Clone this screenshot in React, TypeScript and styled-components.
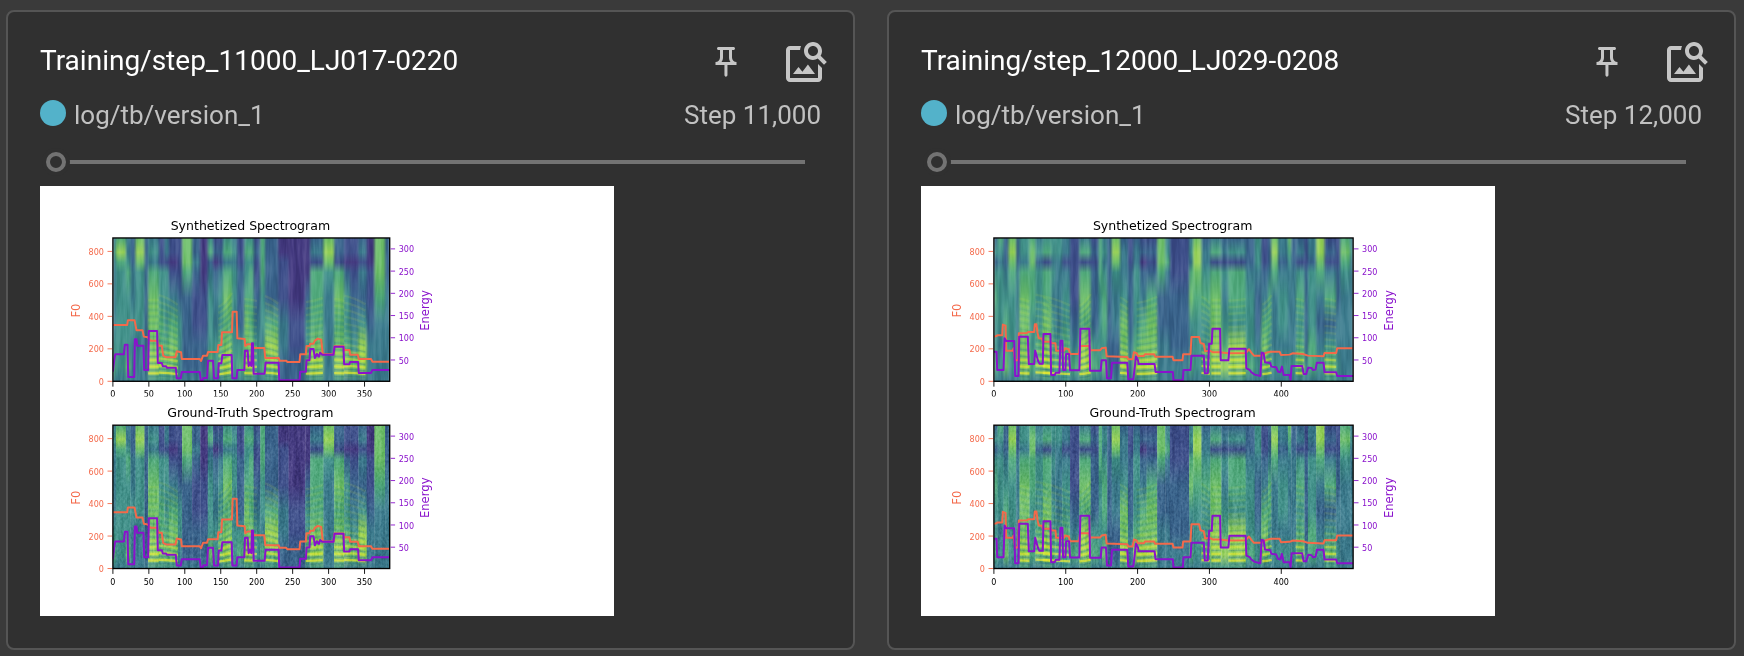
import React, { useId } from "react";
import styled, { createGlobalStyle } from "styled-components";

const GlobalStyle = createGlobalStyle`
  *, *::before, *::after { box-sizing: border-box; }
  body { margin: 0; background: #3a3a3a; font-family: Roboto, "Liberation Sans", sans-serif; }
`;

const Board = styled.main`
  display: grid;
  grid-template-columns: repeat(2, minmax(0, 1fr));
  gap: 32px;
  padding: 10px 8px 6px 6px;
`;

const Card = styled.article`
  padding: 26px 0 32px;
  background: #303030;
  border: 2px solid #555555;
  border-radius: 8px;
`;

const CardHeader = styled.header`
  display: flex;
  align-items: center;
  padding: 0 7px 0 32px;
`;

const Title = styled.h2`
  flex: 1;
  margin: 0;
  padding-bottom: 2px;
  color: #ffffff;
  font-size: 28px;
  font-weight: 400;
  line-height: 32px;
`;

const IconButton = styled.button`
  display: flex;
  align-items: center;
  justify-content: center;
  width: 80px;
  height: 48px;
  padding: 0;
  border: 0;
  background: none;
  color: #c6c6c6;
  cursor: pointer;
`;

const Icon = styled.svg<{ $size: number }>`
  width: ${(p) => p.$size}px;
  height: ${(p) => p.$size}px;
  fill: currentColor;
`;

const RunRow = styled.div`
  display: flex;
  align-items: flex-start;
  gap: 8px;
  margin-top: 14px;
  padding: 0 32px;
  color: #c1c1c1;
  font-size: 26px;
  line-height: 30px;
`;

const RunDot = styled.span<{ $color: string }>`
  width: 26px;
  height: 26px;
  border-radius: 50%;
  background: ${(p) => p.$color};
`;

const RunName = styled.span`
  flex: 1;
`;

const StepSlider = styled.input`
  appearance: none;
  display: block;
  width: calc(100% - 86px);
  height: 20px;
  margin: 22px 48px 0 38px;
  background: none;
  cursor: pointer;

  &::-webkit-slider-runnable-track {
    height: 4px;
    background: #737373;
  }

  &::-webkit-slider-thumb {
    appearance: none;
    width: 20px;
    height: 20px;
    margin-top: -8px;
    border: 4px solid #737373;
    border-radius: 50%;
    background: #303030;
    box-shadow: 0 0 0 4px #303030;
  }
`;

const Figure = styled.figure`
  margin: 14px 32px 0;
`;

const Plot = styled.svg`
  display: block;
  max-width: 100%;
  background: #ffffff;
  font-family: "DejaVu Sans", sans-serif;
`;

type Point = [number, number];
type Band = [number, string];
type Voice = [number, number, number];

interface Sample {
  title: string;
  step: string;
  span: number;
  origin: number;
  frames: number;
  xTicks: number[];
  bands: Band[];
  voices: Voice[];
  f0: Point[];
  energy: Point[];
}

const RAMP = ["#46206e", "#443a80", "#3e4f8a", "#3a648c", "#3b7a8c", "#42918a", "#52aa7e", "#70bf6c", "#98d15a", "#dfe23c"];
const STOPS = [0, 10, 17, 24, 42, 60, 75, 90, 100];

const pairs = (s: string): Point[] =>
  s.trim().split(/\s+/).map((p) => p.split(",").map(Number) as Point);

/* Each band: its left edge and its intensity at the nine heights in STOPS, top to bottom. */
const samples: Sample[] = [
  {
    title: "Training/step_11000_LJ017-0220",
    step: "Step 11,000",
    span: 832,
    origin: 217,
    frames: 385,
    xTicks: [0, 50, 100, 150, 200, 250, 300, 350],
    bands: [
      [217, "454444564"], [226, "686555554"], [256, "445655574"], [270, "333445444"], [285, "787555444"],
      [312, "333333334"], [323, "454677785"], [355, "222556675"], [372, "442555675"], [385, "221246775"],
      [412, "222235544"], [425, "777633334"], [455, "334322334"], [480, "111122334"], [502, "563455574"],
      [518, "231344554"], [534, "232455674"], [548, "564676785"], [575, "454554554"], [590, "222333564"],
      [612, "565567785"], [626, "565666785"], [640, "232234554"], [660, "666655464"], [674, "333336875"],
      [714, "112224433"], [745, "111112233"], [795, "111135574"], [810, "342666785"], [850, "787544444"],
      [882, "332676785"], [912, "221355684"], [930, "221234574"], [955, "342435884"], [980, "111223444"],
      [1003, "777764444"], [1035, "333344444"],
    ],
    voices: [
      [323, 355, 0], [355, 412, 18], [534, 575, -26], [612, 650, 4], [674, 714, 14],
      [797, 848, -8], [882, 912, 3], [912, 976, 16],
    ],
    f0: pairs(`217,435 260,435 262,421 282,421 288,451 306,451 310,470 322,472 330,482 350,482 353,497 364,497
      368,527 378,532 405,532 409,514 422,517 424,537 478,537 482,543 488,527 500,527 503,516 532,516 534,495
      543,495 545,457 575,457 577,395 589,395 591,475 613,477 615,498 622,493 632,493 640,504 672,504 675,534
      715,534 718,542 738,542 741,546 778,546 780,523 797,523 799,498 808,498 810,491 820,491 824,482 833,476
      843,479 848,523 880,523 883,499 910,499 912,510 928,510 930,524 953,524 956,537 993,537 997,545 1049,545`),
    energy: pairs(`217,575 221,540 224,523 250,523 253,494 261,494 263,591 281,591 283,478 288,478 290,497 309,497
      311,570 323,570 325,453 350,453 352,549 364,549 367,559 377,559 379,563 406,563 409,595 421,595 424,576
      478,576 481,601 487,601 489,594 500,594 503,542 518,542 521,595 533,595 535,550 543,550 546,525 574,525
      576,595 589,595 591,570 612,570 614,512 622,512 625,558 629,548 633,558 635,490 638,490 640,581 673,581
      676,548 715,548 717,600 778,601 780,575 797,575 799,541 808,541 810,507 820,507 824,534 830,522 836,530
      840,518 846,524 880,524 883,500 910,500 912,553 928,553 930,546 954,546 956,579 993,579 997,570 1049,570`),
  },
  {
    title: "Training/step_12000_LJ029-0208",
    step: "Step 12,000",
    span: 1080,
    origin: 101,
    frames: 500,
    xTicks: [0, 100, 200, 300, 400],
    bands: [
      [101, "353565564"], [112, "654555454"], [130, "333456674"], [145, "787655554"], [168, "333444444"],
      [178, "554677785"], [208, "677665564"], [226, "453555674"], [248, "562667785"], [274, "554545564"],
      [286, "554444564"], [306, "442455665"], [330, "222223464"], [358, "462676885"], [392, "232333564"],
      [416, "666655554"], [426, "454566574"], [442, "333333334"], [455, "787544334"], [480, "344457785"],
      [504, "222333444"], [520, "344555684"], [540, "231346785"], [560, "232367785"], [592, "777633444"],
      [616, "456433444"], [630, "222233344"], [688, "454675464"], [700, "788765554"], [725, "344565564"],
      [752, "462677885"], [785, "342545685"], [806, "352665885"], [858, "333455564"], [885, "555433454"],
      [905, "222346774"], [925, "333466564"], [935, "787644454"], [955, "443455454"], [985, "765444454"],
      [995, "333444454"], [1010, "342565674"], [1035, "222333344"], [1045, "443555664"], [1070, "887643454"],
      [1095, "232463575"], [1130, "222334454"], [1142, "676544444"], [1172, "454444444"],
    ],
    voices: [
      [178, 208, 5], [248, 274, 10], [226, 330, 20], [358, 392, -22], [480, 504, 10], [530, 592, -12],
      [725, 750, 12], [755, 783, 0], [806, 858, -3], [908, 936, -18], [1008, 1034, 4], [1095, 1130, 4],
    ],
    f0: pairs(`101,470 109,468 111,466 126,466 128,434 136,437 138,512 158,512 160,505 165,541 174,541 176,460
      200,459 204,456 222,456 224,433 229,433 232,458 236,475 246,476 248,485 272,485 275,490 286,490 288,512
      312,512 315,505 326,508 330,522 357,522 360,498 387,498 390,511 420,511 425,505 437,503 440,529 502,531
      505,538 518,538 522,517 530,520 534,528 552,528 555,523 583,523 586,530 638,530 641,541 668,541 670,523
      692,523 695,471 718,471 722,489 732,492 736,514 750,512 760,517 780,517 806,520 858,519 868,508 875,518
      883,527 904,527 920,518 932,515 960,515 964,525 990,524 1000,520 1030,522 1045,527 1092,529 1095,519
      1130,519 1133,505 1181,505`),
    energy: pairs(`101,515 109,515 111,570 130,570 133,475 138,483 162,483 165,588 175,588 177,470 203,470 206,552
      222,552 225,512 234,543 238,551 248,551 250,462 271,462 273,585 284,585 287,578 298,578 301,482 307,482
      309,570 316,570 318,522 327,522 330,571 358,571 361,446 388,446 390,572 422,572 425,541 438,541 441,595
      453,595 456,548 502,548 505,598 520,598 523,575 528,530 534,540 536,552 584,552 587,576 639,576 641,601
      669,601 671,570 692,570 695,527 732,527 735,580 744,580 748,491 756,491 758,446 781,446 783,541 806,541
      809,506 858,506 860,565 870,570 875,577 885,584 902,588 906,518 912,520 916,547 932,549 935,560 950,562
      955,575 962,577 967,560 972,585 990,585 993,600 996,558 1028,558 1032,582 1040,582 1046,563 1056,564
      1060,570 1068,569 1072,548 1092,548 1095,577 1130,577 1133,588 1181,588`),
  },
];

const PLOT_TOP = 174;
const PLOT_HEIGHT = 430;
const F0_TICKS = [0, 200, 400, 600, 800];
const ENERGY_TICKS = [50, 100, 150, 200, 250, 300];
const ORANGE = "#f4694a";
const PURPLE = "#8a12cc";

interface ChartProps {
  sample: Sample;
  title: string;
  top: number;
  grainy?: boolean;
}

function Spectrogram({ sample, title, top, grainy = false }: ChartProps) {
  const id = useId().replace(/[^a-zA-Z0-9]/g, "");
  const { bands, voices, origin, span } = sample;
  const left = 81;
  const width = Math.round(span * 0.3717);
  const height = 160;
  const bottom = top + height;
  const end = origin + span;
  const right = left + width;
  const line = (pts: Point[]) => pts.map((p) => p.join(",")).join(" ");

  return (
    <g>
      <defs>
        {bands.map(([x, levels]) => (
          <linearGradient key={x} id={`${id}b${x}`} x1="0" y1="0" x2="0" y2="1">
            {STOPS.map((offset, i) => (
              <stop key={offset} offset={`${offset}%`} stopColor={RAMP[Number(levels[i])]} />
            ))}
          </linearGradient>
        ))}
        <filter id={`${id}soft`} x="0" y="0" width="1" height="1" colorInterpolationFilters="sRGB">
          <feGaussianBlur stdDeviation={grainy ? "2 1" : "3 2"} edgeMode="duplicate" />
        </filter>
        <filter id={`${id}streak`} x="0" y="0" width="1" height="1" colorInterpolationFilters="sRGB">
          <feTurbulence type="fractalNoise" baseFrequency="0.08 0.008" numOctaves="3" seed={span} />
          <feColorMatrix values="2.4 0 0 0 -0.7  2.4 0 0 0 -0.7  2.4 0 0 0 -0.7  0 0 0 0 1" />
        </filter>
        <filter id={`${id}grain`} x="0" y="0" width="1" height="1" colorInterpolationFilters="sRGB">
          <feTurbulence type="fractalNoise" baseFrequency="0.16 0.1" numOctaves="2" seed={span + 1} />
          <feColorMatrix values="1.8 0 0 0 -0.4  1.8 0 0 0 -0.4  1.8 0 0 0 -0.4  0 0 0 0 1" />
        </filter>
      </defs>
      <text x={left + width / 2 - 1} y={top - 9} fontSize="14" textAnchor="middle">{title}</text>
      <svg x={left} y={top} width={width} height={height} viewBox={`${origin} ${PLOT_TOP} ${span} ${PLOT_HEIGHT}`} preserveAspectRatio="none">
        <g filter={`url(#${id}soft)`}>
          {bands.map(([x], i) => (
            <rect
              key={x}
              x={x}
              y={PLOT_TOP}
              width={(bands[i + 1]?.[0] ?? end) - x + 1}
              height={PLOT_HEIGHT}
              fill={`url(#${id}b${x})`}
            />
          ))}
        </g>
        {voices.map(([a, b, drop]) =>
          Array.from({ length: 12 }, (_, k) => {
            const y = 600 - (k + 1) * 20;
            const bend = (drop * (k + 2)) / 8;
            const mid = (a + b) / 2;
            const d = `M${a} ${y - bend / 2}Q${mid} ${y - bend / 4} ${b} ${y + bend / 2}`;
            return (
              <g key={`${a}-${k}`} fill="none">
                <path d={d} stroke="#e4e833" strokeWidth="7" opacity={Math.max(0.1, 0.75 - k * 0.14)} />
                <path d={d} transform="translate(0 10)" stroke="#2f7f88" strokeWidth="5" opacity={Math.max(0.12, 0.5 - k * 0.05)} />
              </g>
            );
          }),
        )}
        <rect x={origin} y={PLOT_TOP} width={span} height={PLOT_HEIGHT} filter={`url(#${id}streak)`} opacity="0.2" style={{ mixBlendMode: "soft-light" }} />
        {grainy && (
          <rect x={origin} y={PLOT_TOP} width={span} height={PLOT_HEIGHT} filter={`url(#${id}grain)`} opacity="0.22" style={{ mixBlendMode: "soft-light" }} />
        )}
        <g fill="none" strokeLinejoin="round">
          <polyline points={line(sample.f0)} stroke={ORANGE} strokeWidth="6" />
          <polyline points={line(sample.energy)} stroke={PURPLE} strokeWidth="6" />
        </g>
      </svg>
      <rect x={left} y={top} width={width} height={height} fill="none" stroke="#000000" strokeWidth="1.5" />
      <g fontFamily="DejaVu Sans Condensed, DejaVu Sans, sans-serif" fontSize="10">
        {F0_TICKS.map((v) => {
          const y = bottom - (v * 145) / 800;
          return (
            <g key={v} fill={ORANGE}>
              <path d={`M${left - 6} ${y}H${left - 1}`} stroke={ORANGE} />
              <text x={left - 10} y={y + 4} textAnchor="end">{v}</text>
            </g>
          );
        })}
        {ENERGY_TICKS.map((v) => {
          const y = bottom + 1 - (v * 124) / 250;
          return (
            <g key={v} fill={PURPLE}>
              <path d={`M${right + 1} ${y}H${right + 6}`} stroke={PURPLE} />
              <text x={right + 10} y={y + 4}>{v}</text>
            </g>
          );
        })}
        {sample.xTicks.map((v) => {
          const x = left + (v * width) / sample.frames;
          return (
            <g key={v}>
              <path d={`M${x} ${bottom}V${bottom + 6}`} stroke="#000000" />
              <text x={x} y={bottom + 18} textAnchor="middle">{v}</text>
            </g>
          );
        })}
      </g>
      <text transform={`translate(44 ${top + 81}) rotate(-90)`} fontSize="13" textAnchor="middle" fill={ORANGE}>F0</text>
      <text transform={`translate(${right + 44} ${top + 81}) rotate(-90)`} fontSize="13" textAnchor="middle" fill={PURPLE}>Energy</text>
    </g>
  );
}

function ImageCard({ sample }: { sample: Sample }) {
  return (
    <Card>
      <CardHeader>
        <Title>{sample.title}</Title>
        <IconButton type="button" aria-label="Pin card">
          <Icon $size={36} viewBox="0 0 24 24" aria-hidden="true">
            <path d="M14 4v5c0 1.12.37 2.16 1 3H9c.65-.86 1-1.9 1-3V4h4m3-2H7c-.55 0-1 .45-1 1s.45 1 1 1h1v5c0 1.66-1.34 3-3 3v2h5.97v7l1 1 1-1v-7H19v-2c-1.66 0-3-1.34-3-3V4h1c.55 0 1-.45 1-1s-.45-1-1-1z" />
          </Icon>
        </IconButton>
        <IconButton type="button" aria-label="Toggle actual image size">
          <Icon $size={48} viewBox="0 0 24 24" aria-hidden="true">
            <path d="M18 13v7H4V6h5.02c.05-.71.22-1.38.48-2H4c-1.1 0-2 .9-2 2v14c0 1.1.9 2 2 2h14c1.1 0 2-.9 2-2v-5l-2-2zm-1.5 5h-11l2.75-3.53 1.96 2.36 2.75-3.54zm2.8-9.11c.44-.7.7-1.51.7-2.39C20 4.01 17.99 2 15.5 2S11 4.01 11 6.5s2.01 4.5 4.49 4.5c.88 0 1.7-.26 2.39-.7L21 13.42 22.42 12 19.3 8.89zM15.5 9C14.12 9 13 7.88 13 6.5S14.12 4 15.5 4 18 5.12 18 6.5 16.88 9 15.5 9z" />
          </Icon>
        </IconButton>
      </CardHeader>
      <RunRow>
        <RunDot $color="#53b2ca" />
        <RunName>log/tb/version_1</RunName>
        <span>{sample.step}</span>
      </RunRow>
      <StepSlider type="range" min={0} max={10} defaultValue={0} aria-label={`Step of ${sample.title}`} />
      <Figure>
        <Plot width="574" height="430" viewBox="0 0 640 480">
          <Spectrogram sample={sample} title="Synthetized Spectrogram" top={58} />
          <rect x="60" y="235" width="440" height="8" fill="#ffffff" />
          <Spectrogram sample={sample} title="Ground-Truth Spectrogram" top={267} grainy />
        </Plot>
      </Figure>
    </Card>
  );
}

export default function App() {
  return (
    <>
      <GlobalStyle />
      <Board>
        {samples.map((sample) => (
          <ImageCard key={sample.title} sample={sample} />
        ))}
      </Board>
    </>
  );
}
